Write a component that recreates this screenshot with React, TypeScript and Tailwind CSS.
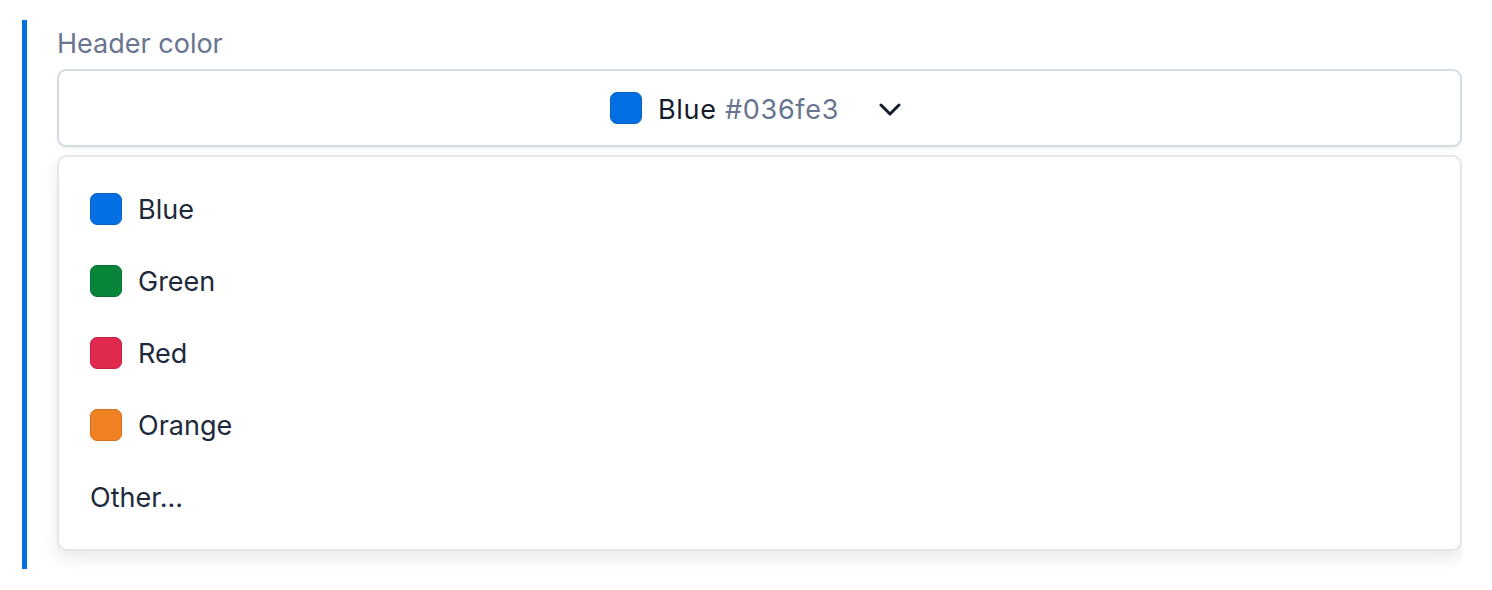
import * as React from "react";

// ─── Data ─────────────────────────────────────────────────────────────────────

const COLORS = [
  { name: "Blue", fill: "bg-[#036fe3]", edge: "border-[#0a62c8]" },
  { name: "Green", fill: "bg-[#05843a]", edge: "border-[#0a7334]" },
  { name: "Red", fill: "bg-[#df2a4d]", edge: "border-[#c7213f]" },
  { name: "Orange", fill: "bg-[#f08223]", edge: "border-[#d8711c]" },
];

// ─── Swatch ───────────────────────────────────────────────────────────────────

function Swatch({ fill, edge }: { fill: string; edge: string }) {
  return <span className={`block w-[32px] h-[32px] rounded-[7px] border ${fill} ${edge}`} />;
}

// ─── Main Component ───────────────────────────────────────────────────────────

export default function App() {
  return (
    <div
      className="bg-white w-[1492px] h-[590px] pl-[22px] pt-[20px] pr-[30px] text-[#1e293b]"
      style={{ fontFamily: "Inter, 'Noto Sans', sans-serif" }}
    >
      <div className="border-l-[5px] border-[#036fe3] pl-[30px] pb-[18px] overflow-hidden">
        {/* ── Label ── */}
        <div className="text-[27px] leading-[32px] pt-[8px] mb-[9px] text-[#687590]">Header color</div>

        {/* ── Trigger ── */}
        <button className="w-full h-[78px] flex items-center justify-center gap-[16px] rounded-[9px] border-2 border-[#d2dce4] bg-white shadow-[0_2px_2px_rgba(0,0,0,0.05)]">
          <Swatch fill="bg-[#036fe3]" edge="border-[#0a62c8]" />
          <span className="text-[27px] leading-none tracking-[0.7px] mt-[2px]">
            <span className="text-[#141b2b]">Blue</span>{" "}
            <span className="text-[#687590]">#036fe3</span>
          </span>
          <svg width="22" height="13" viewBox="0 0 22 13" className="ml-[24px] mr-[8px] mt-[2px]">
            <polyline points="2,2 11,11 20,2" fill="none" stroke="#141b2b" strokeWidth="3" strokeLinecap="round" strokeLinejoin="round" />
          </svg>
        </button>

        {/* ── Menu ── */}
        <div className="mt-[8px] rounded-[10px] border-2 border-[#e4e6e8] bg-white py-[16px] shadow-[0_8px_18px_rgba(0,0,0,0.09)]">
          {COLORS.map((c) => (
            <div key={c.name} className="h-[72px] flex items-center gap-[16px] pl-[31px]">
              <Swatch fill={c.fill} edge={c.edge} />
              <span className="text-[27px] leading-none">{c.name}</span>
            </div>
          ))}
          <div className="h-[72px] flex items-center pl-[31px]">
            <span className="text-[27px] leading-none">Other...</span>
          </div>
        </div>
      </div>
    </div>
  );
}
